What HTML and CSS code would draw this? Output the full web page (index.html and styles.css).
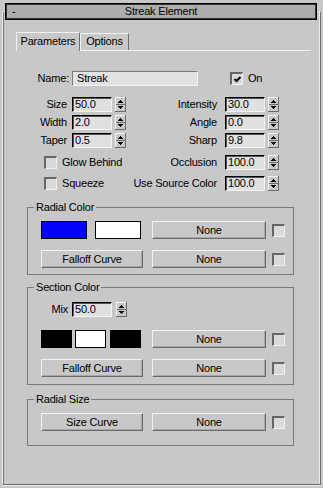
FILE: index.html
```html
<!DOCTYPE html>
<html>
<head>
<meta charset="utf-8">
<link rel="stylesheet" href="styles.css">
</head>
<body>
<svg class="defs" xmlns="http://www.w3.org/2000/svg">
  <symbol id="spin" viewBox="0 0 11 15" shape-rendering="crispEdges">
    <rect width="11" height="15" fill="#c8c8c8"/>
    <rect x="0" y="0" width="10" height="1" fill="#f4f4f4"/>
    <rect x="0" y="0" width="1" height="14" fill="#f4f4f4"/>
    <rect x="10" y="0" width="1" height="15" fill="#6a6a6a"/>
    <rect x="0" y="14" width="11" height="1" fill="#6a6a6a"/>
    <rect x="1" y="7" width="9" height="1" fill="#6a6a6a"/>
    <rect x="5" y="3" width="1" height="1" fill="#000"/>
    <rect x="4" y="4" width="3" height="1" fill="#000"/>
    <rect x="3" y="5" width="5" height="1" fill="#000"/>
    <rect x="3" y="9" width="5" height="1" fill="#000"/>
    <rect x="4" y="10" width="3" height="1" fill="#000"/>
    <rect x="5" y="11" width="1" height="1" fill="#000"/>
  </symbol>
</svg>

<div class="rollout">
  <div class="titlebar">
    <span class="collapse">-</span>
    <span class="title">Streak Element</span>
    <span></span>
  </div>

  <div class="tabs">
    <div class="tab active">Parameters</div>
    <div class="tab opt">Options</div>
  </div>

  <div class="name-row">
    <span class="name-lbl">Name:</span>
    <div class="field name-field">Streak</div>
    <span class="cb on-cb"><svg width="9" height="9" viewBox="0 0 9 9"><polyline points="1.5,4 3.5,6 7.5,2" fill="none" stroke="#000" stroke-width="2"/></svg></span>
    <span class="on-lbl">On</span>
  </div>

  <div class="prow first">
    <div class="left"><span class="lbl-l">Size</span><div class="field num">50.0</div><svg class="spin"><use href="#spin"/></svg></div>
    <div class="right"><span class="lbl-r">Intensity</span><div class="field num">30.0</div><svg class="spin"><use href="#spin"/></svg></div>
  </div>
  <div class="prow">
    <div class="left"><span class="lbl-l">Width</span><div class="field num">2.0</div><svg class="spin"><use href="#spin"/></svg></div>
    <div class="right"><span class="lbl-r">Angle</span><div class="field num">0.0</div><svg class="spin"><use href="#spin"/></svg></div>
  </div>
  <div class="prow">
    <div class="left"><span class="lbl-l">Taper</span><div class="field num">0.5</div><svg class="spin"><use href="#spin"/></svg></div>
    <div class="right"><span class="lbl-r">Sharp</span><div class="field num">9.8</div><svg class="spin"><use href="#spin"/></svg></div>
  </div>
  <div class="prow occ">
    <div class="left"><span class="cb row-cb"></span><span class="cb-lbl">Glow Behind</span></div>
    <div class="right"><span class="lbl-r">Occlusion</span><div class="field num">100.0</div><svg class="spin"><use href="#spin"/></svg></div>
  </div>
  <div class="prow usc">
    <div class="left"><span class="cb row-cb"></span><span class="cb-lbl">Squeeze</span></div>
    <div class="right"><span class="lbl-r">Use Source Color</span><div class="field num">100.0</div><svg class="spin"><use href="#spin"/></svg></div>
  </div>

  <fieldset class="group radial">
    <legend>Radial Color</legend>
    <div class="gbody">
      <div class="grow">
        <div class="gleft"><span class="swatch blue"></span><span class="swatch white w46"></span></div>
        <div class="btn none">None</div>
        <span class="cb small"></span>
      </div>
      <div class="grow">
        <div class="gleft"><div class="btn wide">Falloff Curve</div></div>
        <div class="btn none">None</div>
        <span class="cb small"></span>
      </div>
    </div>
  </fieldset>

  <fieldset class="group section">
    <legend>Section Color</legend>
    <div class="gbody">
      <div class="mix-row"><span class="mix-lbl">Mix</span><div class="field num">50.0</div><svg class="spin mix-spin"><use href="#spin"/></svg></div>
      <div class="grow">
        <div class="gleft"><span class="swatch black s31"></span><span class="swatch white s31 g3"></span><span class="swatch black s31 g4"></span></div>
        <div class="btn none">None</div>
        <span class="cb small"></span>
      </div>
      <div class="grow">
        <div class="gleft"><div class="btn wide">Falloff Curve</div></div>
        <div class="btn none">None</div>
        <span class="cb small"></span>
      </div>
    </div>
  </fieldset>

  <fieldset class="group rsize">
    <legend>Radial Size</legend>
    <div class="gbody">
      <div class="grow">
        <div class="gleft"><div class="btn wide">Size Curve</div></div>
        <div class="btn none">None</div>
        <span class="cb small"></span>
      </div>
    </div>
  </fieldset>
</div>
</body>
</html>
```

FILE: styles.css
```css
* {
  box-sizing: border-box;
}

html, body {
  background: #c8c8c8;
}

body {
  margin: 0;
  width: 323px;
  height: 488px;
  overflow: hidden;
  font-family: "Liberation Sans", Arial, sans-serif;
  font-size: 11px;
  line-height: 13px;
  letter-spacing: -0.2px;
  color: #000;
}

.defs {
  display: none;
}

.rollout {
  margin: 11px 0 0 2px;
  width: 319px;
  height: 474px;
  border: 1px solid;
  border-color: #ececec #6e6e6e #6e6e6e #ececec;
  box-shadow: inset 1px 0 0 #7a7a7a, inset -1px 0 0 #ececec, 0 1px 0 #ececec;
}

.titlebar {
  margin: -9px 3px 0 2px;
  height: 17px;
  border: 1px solid #000;
  box-shadow: inset 0 0 0 1px #333;
  background: #adadad;
  display: grid;
  grid-template-columns: 1fr auto 1fr;
  align-items: center;
}

.collapse {
  padding-left: 6px;
}

.tabs {
  display: flex;
  align-items: flex-end;
  margin: 12px 0 0 13px;
  width: 295px;
  height: 19px;
  border-bottom: 1px solid #f2f2f2;
}

.tab {
  height: 17px;
  border: 1px solid;
  border-bottom: 0;
  border-color: #f2f2f2 #6e6e6e transparent #f2f2f2;
  border-radius: 2px 2px 0 0;
  text-align: center;
  line-height: 15px;
}

.tab.active {
  width: 64px;
  height: 19px;
  margin-bottom: -1px;
  background: #c8c8c8;
  line-height: 17px;
}

.tab.opt {
  width: 49px;
}

.name-row {
  display: flex;
  align-items: center;
  height: 15px;
  margin-top: 20px;
}

.name-lbl {
  width: 66px;
  text-align: right;
  margin-right: 3px;
}

.field {
  height: 15px;
  display: flex;
  align-items: center;
  white-space: nowrap;
}

.name-field {
  width: 126px;
  padding-left: 4px;
  background: #e2e2e2;
  border: 1px solid;
  border-color: #7a7a7a #f4f4f4 #f4f4f4 #7a7a7a;
}

.num {
  width: 40px;
  padding-left: 2px;
  background: #e0e0e0;
  border: 1px solid;
  border-color: #000 #f4f4f4 #f4f4f4 #000;
  box-shadow: inset 1px 1px 0 #555;
}

.cb {
  display: flex;
  align-items: center;
  justify-content: center;
  width: 13px;
  height: 13px;
  flex: none;
  background: #dadada;
  border-style: solid;
  border-width: 2px 1px 1px 2px;
  border-color: #666 #f0f0f0 #f0f0f0 #666;
}

.on-cb {
  margin-left: 32px;
}

.on-lbl {
  margin-left: 5px;
}

.prow {
  display: flex;
  align-items: center;
  height: 15px;
  margin-top: 3px;
}

.prow.first {
  margin-top: 11px;
}

.prow.occ {
  margin-top: 7px;
}

.prow.usc {
  margin-top: 6px;
}

.left {
  width: 123px;
  display: flex;
  align-items: center;
  flex: none;
}

.right {
  display: flex;
  align-items: center;
}

.lbl-l {
  width: 64px;
  text-align: right;
  margin-right: 5px;
}

.lbl-r {
  width: 91px;
  text-align: right;
  margin-right: 8px;
  white-space: nowrap;
}

.spin {
  width: 11px;
  height: 15px;
  margin-left: 3px;
  flex: none;
}

.row-cb {
  margin-left: 41px;
}

.cb-lbl {
  margin-left: 5px;
  white-space: nowrap;
}

.group {
  margin: 10px 0 0 24px;
  width: 267px;
  min-width: 0;
  padding: 0;
  border: 1px solid #7b7b7b;
}

.group.section {
  margin-top: 6px;
}

.group.rsize {
  margin-top: 8px;
}

.group legend {
  margin-left: 6px;
  padding: 0 2px;
  line-height: 13px;
}

.gbody {
  padding: 7px 0 6px 13px;
}

.section .gbody {
  padding-top: 8px;
  padding-bottom: 7px;
}

.rsize .gbody {
  padding-bottom: 14px;
}

.grow {
  display: flex;
  align-items: center;
  height: 18px;
}

.grow + .grow {
  margin-top: 11px;
}

.mix-row + .grow {
  margin-top: 13px;
}

.gleft {
  width: 111px;
  display: flex;
  flex: none;
}

.swatch {
  display: block;
  height: 18px;
  border: 1px solid #000;
}

.blue {
  width: 46px;
  background: #0000ff;
}

.white {
  background: #fff;
}

.w46 {
  width: 46px;
  margin-left: 8px;
}

.black {
  background: #000;
}

.s31 {
  width: 31px;
}

.g3 {
  margin-left: 3px;
}

.g4 {
  margin-left: 4px;
}

.btn {
  height: 18px;
  display: flex;
  align-items: center;
  justify-content: center;
  border: 1px solid;
  border-color: #f2f2f2 #6a6a6a #6a6a6a #f2f2f2;
  box-shadow: inset -1px -1px 0 #a8a8a8;
  white-space: nowrap;
}

.btn.wide {
  width: 102px;
}

.btn.none {
  width: 114px;
  flex: none;
}

.cb.small {
  margin-left: 6px;
}

.mix-row {
  display: flex;
  align-items: center;
  height: 15px;
}

.mix-lbl {
  width: 27px;
  text-align: right;
  margin-right: 4px;
}

.mix-spin {
  margin-left: 4px;
}
```
